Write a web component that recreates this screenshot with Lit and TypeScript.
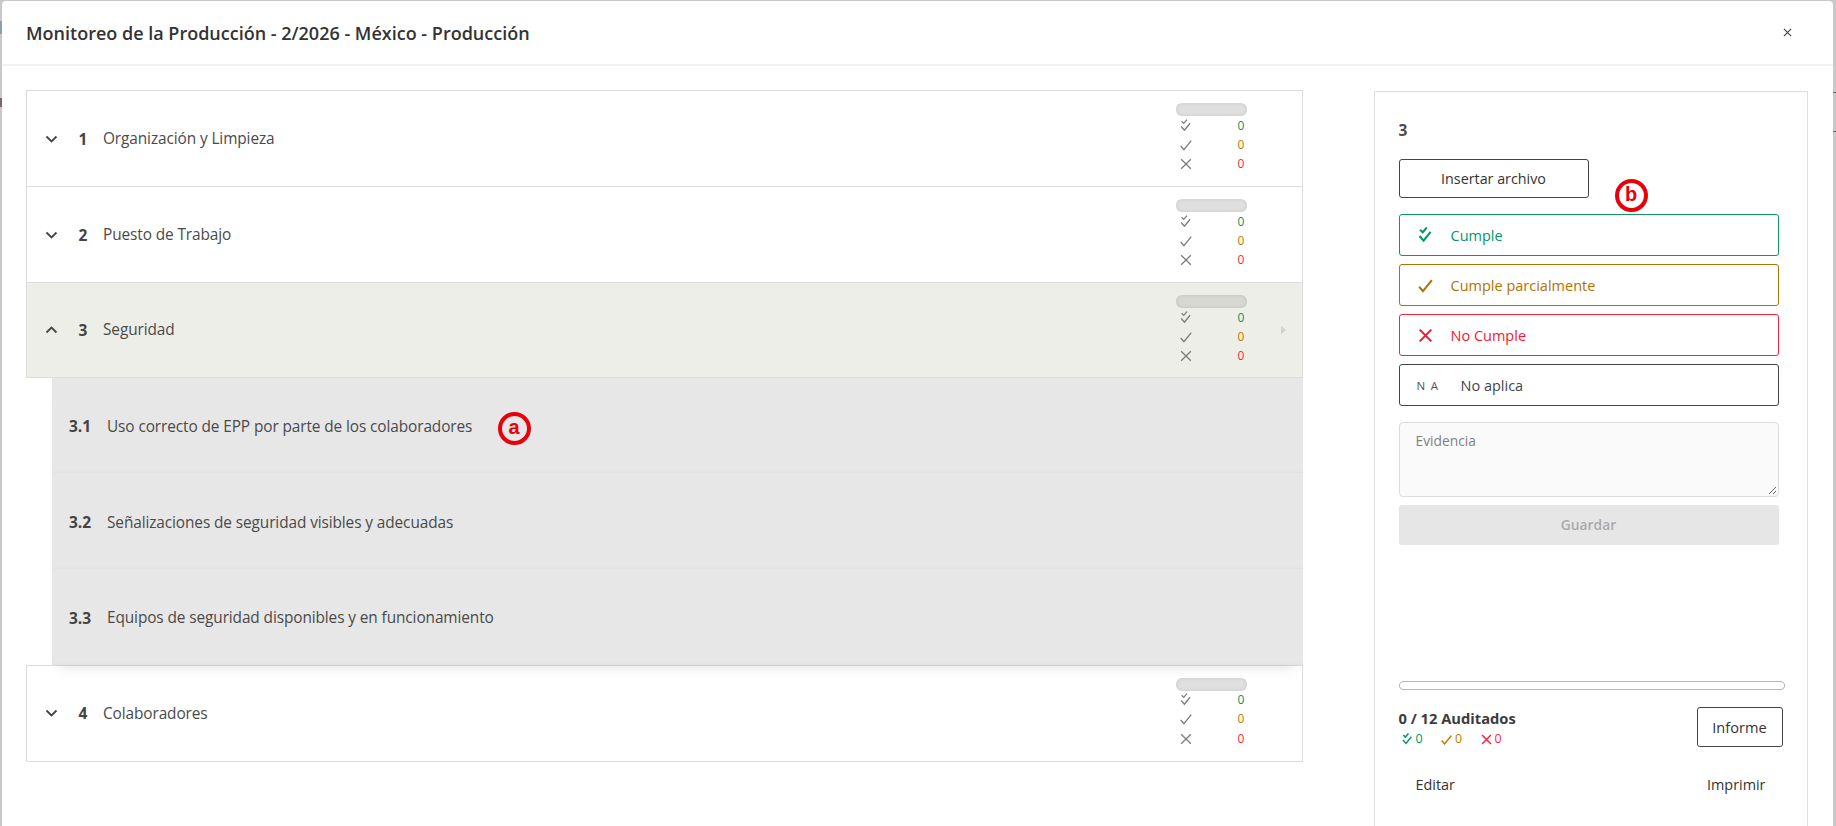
import { LitElement, html, css, svg } from "lit";
import { customElement } from "lit/decorators.js";

const dbl = svg`<path d="M3.5 3.2 5.4 5 8.6 1.2M3 9.2l3.2 3.6 6-7.4" fill="none" stroke="currentColor" stroke-linecap="square"/>`;
const chk = svg`<path d="M2 9.2l3.6 4.2L14 3" fill="none" stroke="currentColor"/>`;
const crs = svg`<path d="M2.5 2.5l11 11M13.5 2.5l-11 11" fill="none" stroke="currentColor"/>`;
const icon = (p: unknown, cls: string) => html`<svg class=${cls} viewBox="0 0 16 16">${p}</svg>`;
const chevDown = svg`<path d="M1.5 1.5 6.5 6.5 11.5 1.5" fill="none" stroke="currentColor" stroke-width="1.8"/>`;
const chevUp = svg`<path d="M1.5 6.5 6.5 1.5 11.5 6.5" fill="none" stroke="currentColor" stroke-width="1.8"/>`;

@customElement("app-root")
export class AppRoot extends LitElement {
  static styles = css`
    :host { display: block; height: 826px; overflow: hidden; background: #c8c8c8; position: relative;
      font-family: "Open Sans", "Noto Sans", sans-serif; color: #3c3c3c; font-size: 14px; }
    .modal { margin: 1px 3px 0 2px; height: 825px; background: #fff; border-radius: 4px 4px 0 0; overflow: hidden; }
    .head { height: 63px; border-bottom: 2px solid #f2f2f2; display: flex; align-items: center; justify-content: space-between; padding: 0 41px 0 24px; }
    .title { font-size: 18px; font-weight: 600; color: #333; }
    .close { width: 9px; height: 9px; color: #444; display: block; }
    .body { display: flex; align-items: flex-start; padding: 24px 0 0 24px; }
    .acc { width: 1277px; flex: none; }
    .item { height: 96px; box-sizing: border-box; border: 1px solid #dcdcdc; border-bottom: 0; display: flex; align-items: center; position: relative; }
    .item.last { border-bottom: 1px solid #dcdcdc; height: 97px; }
    .item.open { background: #eeeee8; border-bottom: 1px solid #dcdcdc; height: 95.5px; }
    .chev { width: 13px; height: 8px; margin-left: 18px; color: #444; flex: none; }
    .n { width: 30px; margin-left: 11px; text-align: center; font-weight: 700; font-size: 15.5px; flex: none; box-sizing: border-box; padding-right: 2px; color: #444; }
    .t { font-size: 15.4px; letter-spacing: -.1px; margin-left: 4px; flex: 1; color: #4a4a4a; }
    .stats { width: 71px; margin-right: 55px; flex: none; align-self: flex-start; padding-top: 12px; }
    .bar { height: 13px; border-radius: 6px; background: #e0e0e0; box-shadow: inset 0 0 4px rgba(0,0,0,.1); }
    .open .bar { background: #d8d8d3; }
    .sr { display: flex; justify-content: space-between; align-items: center; height: 19.2px; font-size: 12px; padding-left: 3px; box-sizing: border-box; line-height: 1; }
    .si { width: 14px; height: 14px; color: #7c7c7c; stroke-width: 1.5; }
    .z { width: 8px; text-align: center; margin-right: 2px; }
    .g { color: #00966a; } .o { color: #bf7a00; } .r { color: #ff1f3d; }
    .caret { position: absolute; right: 16px; top: 42.5px; width: 0; height: 0; border-left: 5px solid #d2d2ce; border-top: 4.5px solid transparent; border-bottom: 4.5px solid transparent; }
    .subs { margin-left: 25.5px; background: #e7e7e7; position: relative; z-index: 1; box-shadow: 0 10px 12px -8px rgba(0,0,0,.12); }
    .sub { height: 95.7px; box-sizing: border-box; padding: 2px 0 0 17.5px; display: flex; align-items: center; box-shadow: inset 0 -5px 5px -5px rgba(0,0,0,.04); }
    .sub b { width: 38px; font-size: 15.5px; font-weight: 700; flex: none; color: #444; }
    .sub span { font-size: 15.4px; letter-spacing: -.1px; color: #4a4a4a; }
    .panel { margin: 1px 0 0 71px; width: 434px; height: 900px; flex: none; box-sizing: border-box; border: 1px solid #dfdfdf; padding: 0 0 0 23.5px; }
    .num { font-size: 15.5px; font-weight: 700; height: 67px; padding-top: 27px; box-sizing: border-box; line-height: 22px; color: #4a4a4a; }
    .ins { width: 190px; height: 39px; border: 1px solid #444; border-radius: 3px; text-align: center; line-height: 37px; font-size: 14.3px; font-weight: 500; box-sizing: border-box; color: #333; }
    .opt { width: 380px; height: 42px; box-sizing: border-box; border: 1px solid; border-radius: 3px; display: flex; align-items: center; font-size: 14.5px; font-weight: 500; margin-top: 8px; }
    .opt.first { margin-top: 16px; }
    .opt svg { width: 17px; height: 17px; margin-left: 17px; margin-right: 17px; flex: none; stroke-width: 1.9; }
    .opt.g { border-color: #0f9560; color: #00966a; }
    .opt.o { border-color: #b37100; color: #b37100; }
    .opt.r { border-color: #f5233c; color: #f5162f; }
    .opt.k { border-color: #444; color: #3f4650; }
    .na { font-size: 11.5px; letter-spacing: 5.5px; margin-left: 17px; width: 44px; color: #555; font-weight: 400; }
    .ta { width: 380px; height: 75px; margin-top: 16px; box-sizing: border-box; border: 1px solid #dcdcdc; border-radius: 4px; background: #fafafa; padding: 8px 16px; font-size: 13.8px; color: #808080; position: relative; }
    .grip { position: absolute; right: 1px; bottom: 1px; width: 9px; height: 9px; }
    .save { width: 380px; height: 40px; margin-top: 8px; background: #e6e6e6; border-radius: 3px; text-align: center; line-height: 40px; font-size: 13.8px; font-weight: 600; color: #aaa; }
    .prog { width: 386px; height: 9px; margin-top: 136px; box-sizing: border-box; border: 1px solid #b5b5b5; border-radius: 4px; }
    .foot { width: 384px; display: flex; justify-content: space-between; margin-top: 17px; height: 40px; }
    .aud { font-size: 14.7px; font-weight: 700; color: #3c3c3c; line-height: 22px; }
    .cnt { display: flex; font-size: 12.5px; line-height: 16px; margin-top: 2px; padding-left: 2px; }
    .cnt div { display: flex; align-items: center; width: 39.5px; gap: 2px; }
    .cnt svg { width: 13px; height: 13px; stroke-width: 1.8; flex: none; }
    .inf { width: 86px; height: 40px; box-sizing: border-box; border: 1px solid #444; border-radius: 3px; text-align: center; line-height: 38px; font-size: 14.6px; font-weight: 500; color: #333; }
    .links { width: 367px; display: flex; justify-content: space-between; margin-top: 28px; padding-left: 17px; box-sizing: border-box; font-size: 14.4px; font-weight: 500; color: #333; line-height: 20px; }
    .badge { position: absolute; z-index: 5; width: 25px; height: 25px; border: 4px solid #e8000d; border-radius: 50%; color: #e8000d; font: 700 20px/23px "Liberation Sans", Arial, sans-serif; text-align: center; }
    .ba { left: 497.5px; top: 412px; }
    .bb { left: 1614.5px; top: 179px; background: #fff; }
    .mark { position: absolute; background: #666; }
    .m1 { left: 1833px; top: 92px; width: 3px; height: 1px; }
    .m2 { left: 1833px; top: 131px; width: 3px; height: 1px; }
    .m3 { left: 0; top: 98px; width: 2px; height: 9px; background: #7a6a66; }
    .m4 { left: 0; top: 21px; width: 2px; height: 13px; background: #8fa0ad; }
  `;

  stats(open = false) {
    const rows: [unknown, string][] = [[dbl, "g"], [chk, "o"], [crs, "r"]];
    return html`<div class="stats"><div class="bar"></div>
      ${rows.map(([p, c]) => html`<div class="sr">${icon(p, "si")}<span class="z ${c}">0</span></div>`)}</div>
      ${open ? html`<i class="caret"></i>` : ""}`;
  }

  item(n: string, t: string, cls = "") {
    const open = cls === "open";
    return html`<div class="item ${cls}">
      <svg class="chev" viewBox="0 0 13 8">${open ? chevUp : chevDown}</svg>
      <div class="n">${n}</div><div class="t">${t}</div>${this.stats(open)}</div>`;
  }

  render() {
    return html`<div class="modal">
      <div class="head"><div class="title">Monitoreo de la Producción - 2/2026 - México - Producción</div>
        <svg class="close" viewBox="0 0 10 10"><path d="M1 1l8 8M9 1 1 9" stroke="currentColor" stroke-width="1.3"/></svg></div>
      <div class="body">
        <div class="acc">
          ${this.item("1", "Organización y Limpieza")}
          ${this.item("2", "Puesto de Trabajo")}
          ${this.item("3", "Seguridad", "open")}
          <div class="subs">
            <div class="sub"><b>3.1</b><span>Uso correcto de EPP por parte de los colaboradores</span></div>
            <div class="sub"><b>3.2</b><span>Señalizaciones de seguridad visibles y adecuadas</span></div>
            <div class="sub"><b>3.3</b><span>Equipos de seguridad disponibles y en funcionamiento</span></div>
          </div>
          ${this.item("4", "Colaboradores", "last")}
        </div>
        <div class="panel">
          <div class="num">3</div>
          <div class="ins">Insertar archivo</div>
          <div class="opt first g">${icon(dbl, "")}Cumple</div>
          <div class="opt o">${icon(chk, "")}Cumple parcialmente</div>
          <div class="opt r">${icon(crs, "")}No Cumple</div>
          <div class="opt k"><span class="na">NA</span>No aplica</div>
          <div class="ta">Evidencia<svg class="grip" viewBox="0 0 9 9"><path d="M1 8l7-7M5 8l3-3" stroke="#666" stroke-width="1"/></svg></div>
          <div class="save">Guardar</div>
          <div class="prog"></div>
          <div class="foot">
            <div>
              <div class="aud">0 / 12 Auditados</div>
              <div class="cnt">
                <div class="g">${icon(dbl, "")}0</div>
                <div class="o">${icon(chk, "")}0</div>
                <div class="r">${icon(crs, "")}0</div>
              </div>
            </div>
            <div class="inf">Informe</div>
          </div>
          <div class="links"><span>Editar</span><span>Imprimir</span></div>
        </div>
      </div>
    </div>
    <div class="badge ba">a</div>
    <div class="badge bb">b</div>
    <i class="mark m1"></i><i class="mark m2"></i><i class="mark m3"></i><i class="mark m4"></i>`;
  }
}
